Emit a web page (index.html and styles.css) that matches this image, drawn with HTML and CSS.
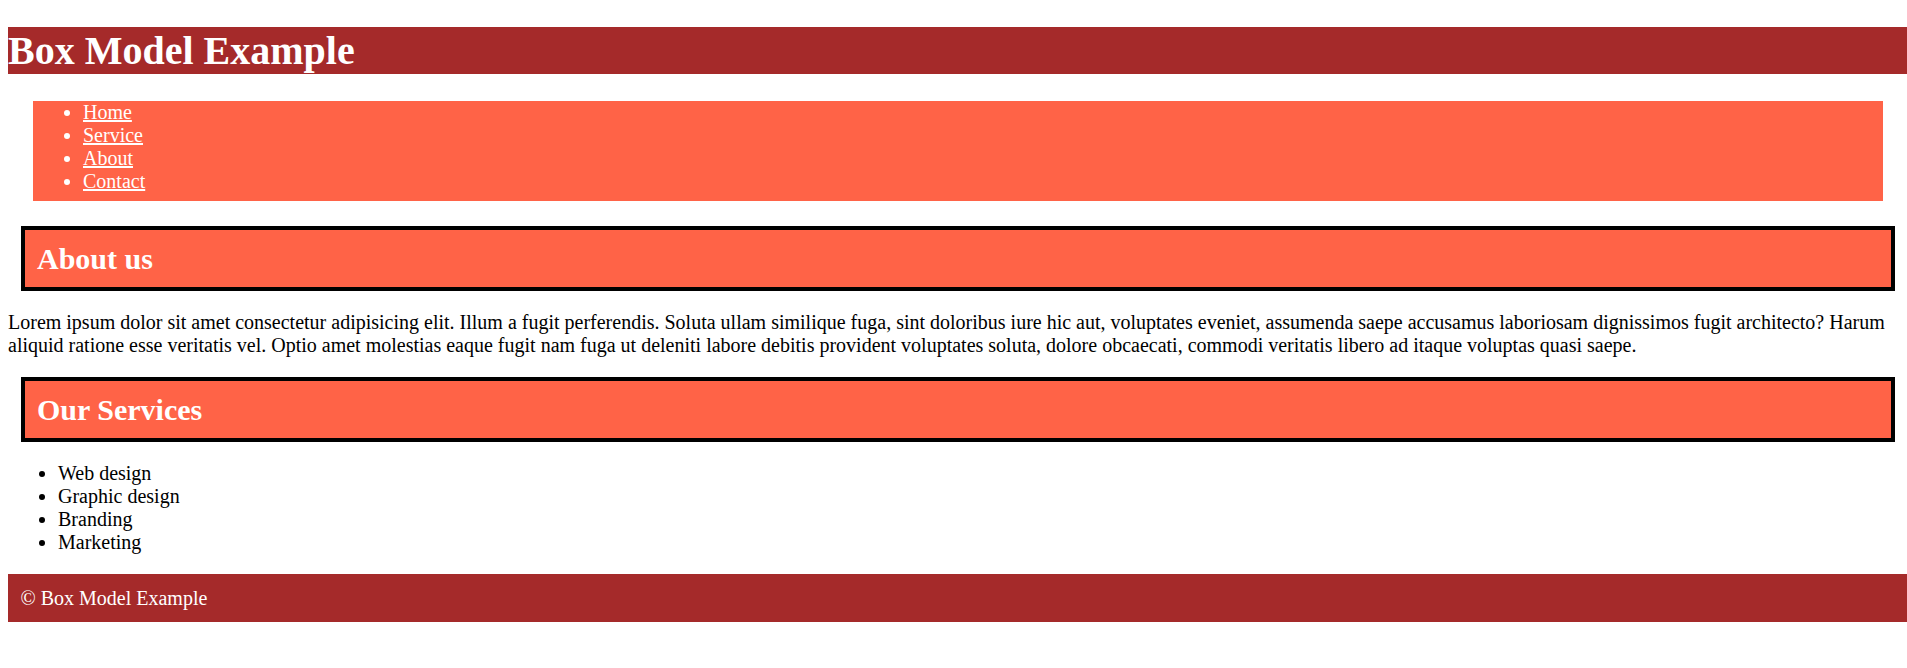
FILE: index.html
```html
<!DOCTYPE html>
<html lang="en">
<head>
<meta charset="utf-8">
<title>Box Model Example</title>
<link rel="stylesheet" href="styles.css">
</head>
<body>
  <header class="site-header">
    <h1 class="site-title">Box Model Example</h1>
  </header>
  <nav class="site-nav">
    <ul class="nav-list">
      <li><a href="#">Home</a></li>
      <li><a href="#">Service</a></li>
      <li><a href="#">About</a></li>
      <li><a href="#">Contact</a></li>
    </ul>
  </nav>
  <main class="content">
    <h2 class="section-title section-title--about">About us</h2>
    <p class="about-text">Lorem ipsum dolor sit amet consectetur adipisicing elit. Illum a fugit perferendis. Soluta ullam similique fuga, sint doloribus iure hic aut, voluptates eveniet, assumenda saepe accusamus laboriosam dignissimos fugit architecto? Harum aliquid ratione esse veritatis vel. Optio amet molestias eaque fugit nam fuga ut deleniti labore debitis provident voluptates soluta, dolore obcaecati, commodi veritatis libero ad itaque voluptas quasi saepe.</p>
    <h2 class="section-title">Our Services</h2>
    <ul class="services">
      <li>Web design</li>
      <li>Graphic design</li>
      <li>Branding</li>
      <li>Marketing</li>
    </ul>
  </main>
  <footer class="site-footer">&copy; Box Model Example</footer>
</body>
</html>
```

FILE: styles.css
```css
html, body {
  background: #ffffff;
}

body {
  margin: 27px 0 0 8px;
  font-family: "Liberation Serif", "Times New Roman", serif;
  font-size: 20px;
  line-height: 23px;
  color: #000000;
}

.site-header {
  background: #a52a2a;
  color: #ffffff;
}

.site-title {
  margin: 0;
  font-size: 40px;
  line-height: 47px;
  font-weight: bold;
}

.site-nav {
  margin: 27px 24px 0 25px;
  background: #ff6347;
  height: 100px;
}

.nav-list {
  margin: 0;
  padding: 0 0 0 50px;
  color: #ffffff;
}

.nav-list a {
  color: #ffffff;
  text-decoration: underline;
}

.content {
  display: block;
}

.section-title {
  margin: 20px 12px 0 13px;
  padding: 11px 12px;
  background: #ff6347;
  border: 4px solid #000000;
  color: #ffffff;
  font-size: 30px;
  line-height: 35px;
  font-weight: bold;
}

.section-title--about {
  margin-top: 25px;
}

.about-text {
  margin: 20px 0;
}

.services {
  margin: 20px 0 0 0;
  padding-left: 50px;
}

.site-footer {
  margin-top: 20px;
  background: #a52a2a;
  color: #ffffff;
  padding: 12.5px 12.5px;
  line-height: 23px;
}
```
